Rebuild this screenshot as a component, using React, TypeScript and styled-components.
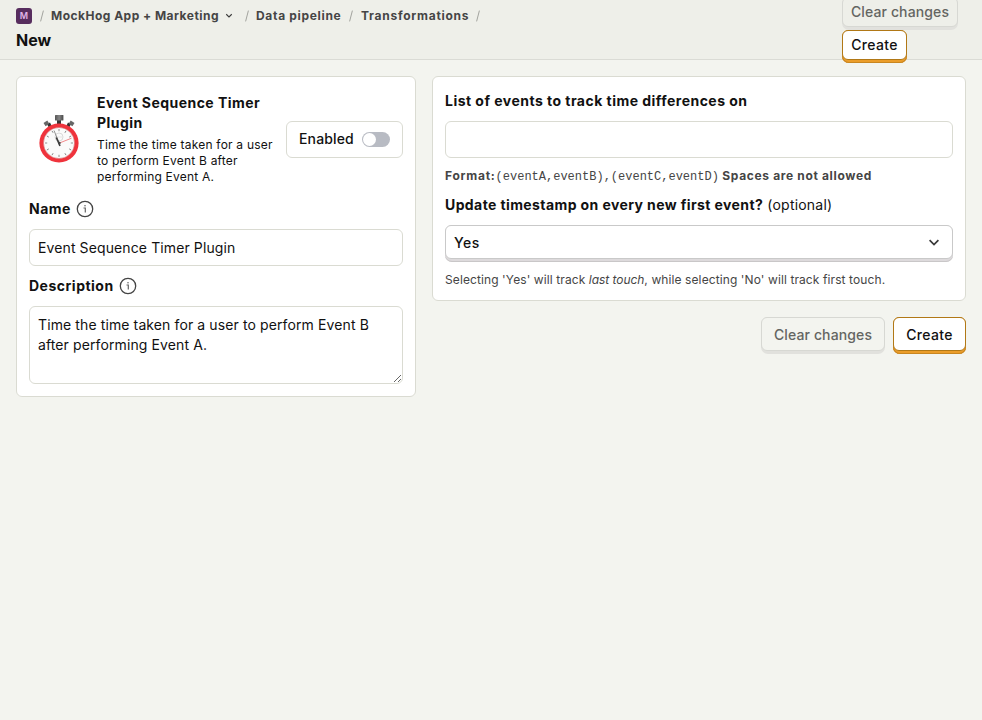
import React from 'react';
import styled, { createGlobalStyle, css } from 'styled-components';

const GlobalStyle = createGlobalStyle`
  *, *::before, *::after { box-sizing: border-box; }
  body {
    margin: 0;
    background: #f3f4ef;
    color: #111;
    font-family: Inter, sans-serif;
    font-size: 14px;
    line-height: 20px;
  }
`;

const Page = styled.div`
  min-height: 720px;
`;

const Header = styled.header`
  display: flex;
  align-items: center;
  justify-content: space-between;
  height: 60px;
  padding: 0 16px;
  background: #eeefe9;
  border-bottom: 1px solid #dadbd5;
`;

const Heading = styled.div`
  display: flex;
  flex-direction: column;
  height: 60px;
  padding-top: 8px;
`;

const Breadcrumbs = styled.nav`
  display: flex;
  align-items: center;
  height: 16px;
  font-size: 12px;
  line-height: 16px;
  font-weight: 700;
  color: #454545;
  white-space: nowrap;
`;

const ProjectBadge = styled.span`
  display: flex;
  align-items: center;
  justify-content: center;
  width: 16px;
  height: 16px;
  border-radius: 3px;
  background: #572d5e;
  color: #e2b5e8;
  font-size: 9px;
  font-weight: 600;
`;

const Crumb = styled.span<{ $width: number; $spacing: number }>`
  width: ${p => p.$width}px;
  letter-spacing: ${p => p.$spacing}px;
`;

const CrumbToggle = styled.span`
  display: flex;
  align-items: center;
  gap: 5px;
`;

const Separator = styled.span<{ $before?: number; $after?: number }>`
  width: 4px;
  height: 12px;
  margin: 0 ${p => p.$after ?? 7}px 0 ${p => p.$before ?? 8}px;
  display: flex;
`;

const Title = styled.h1`
  margin: 6px 0 0;
  font-size: 16px;
  line-height: 20px;
  font-weight: 700;
`;

const HeaderActions = styled.div`
  display: flex;
  flex-wrap: wrap;
  column-gap: 8px;
  width: 124px;
  margin-bottom: -1px;
`;

const FormActions = styled.div`
  display: flex;
  justify-content: flex-end;
  gap: 8px;
`;

const ButtonFace = styled.span`
  display: flex;
  align-items: center;
  justify-content: center;
  width: 100%;
  border: 1px solid;
  border-radius: 6px;
  white-space: nowrap;
`;

const Button = styled.button<{ $primary?: boolean; $small?: boolean; $width: number }>`
  display: flex;
  align-items: flex-start;
  width: ${p => p.$width}px;
  height: ${p => (p.$small ? 33 : 37)}px;
  padding: 0;
  border: 0;
  border-radius: 7px;
  font: 500 14px/20px Inter, sans-serif;

  ${ButtonFace} {
    height: ${p => (p.$small ? 30 : 34)}px;
    padding-top: ${p => (p.$small ? 0 : 2)}px;
  }

  ${p =>
    p.$primary
      ? css`
          color: #111;
          letter-spacing: 0.35px;
          background: #eb9d2a;
          box-shadow: inset 0 -1px 0 #c98620, inset 1px 0 0 #c98620, inset -1px 0 0 #c98620;
          ${ButtonFace} { background: #fff; border-color: #b17816; }
        `
      : css`
          color: #646562;
          letter-spacing: 0.12px;
          background: #e1e1dd;
          ${ButtonFace} {
            background: ${p.$small ? '#eeefe9' : '#f3f4ef'};
            border-color: #d7d8d3;
          }
        `}
`;

const Main = styled.main`
  display: flex;
  align-items: flex-start;
  gap: 16px;
  padding: 16px;
`;

const Column = styled.div<{ $width?: number }>`
  display: flex;
  flex-direction: column;
  gap: 16px;
  min-width: 0;
  ${p => (p.$width ? `width: ${p.$width}px; flex: none;` : 'flex: 1;')}
`;

const Card = styled.section`
  padding: 12px;
  background: #fff;
  border: 1px solid #dadbd2;
  border-radius: 6px;
`;

const PluginRow = styled.div`
  display: flex;
  align-items: center;
  gap: 8px;
  margin: 4px 0 14px;
`;

const PluginIcon = styled.div`
  display: flex;
  width: 60px;
  height: 60px;
  flex: none;
`;

const PluginInfo = styled.div`
  flex: 1;
  min-width: 0;
`;

const PluginName = styled.div`
  font-weight: 700;
  letter-spacing: 0.45px;
  margin-bottom: 4px;
`;

const PluginDescription = styled.div`
  font-size: 12px;
  line-height: 16px;
  letter-spacing: 0.21px;
`;

const EnabledBox = styled.label`
  display: flex;
  align-items: center;
  justify-content: space-between;
  width: 117px;
  height: 37px;
  flex: none;
  padding: 0 12px;
  border: 1px solid #dadbd2;
  border-radius: 6px;
  font-weight: 500;
  letter-spacing: 0.14px;
`;

const ToggleTrack = styled.span`
  display: flex;
  align-items: center;
  width: 28px;
  height: 15px;
  padding: 1px;
  border-radius: 8px;
  background: #b8bbc3;
`;

const ToggleHandle = styled.span`
  width: 13px;
  height: 13px;
  border-radius: 50%;
  background: #fff;
`;

const FieldLabel = styled.div<{ $top?: number; $spacing?: number }>`
  display: flex;
  align-items: center;
  height: 20px;
  margin: ${p => p.$top ?? 10}px 0 10px;
  font-weight: 700;
  letter-spacing: ${p => p.$spacing ?? 0.5}px;
  white-space: pre;
`;

const Optional = styled.span`
  font-weight: 400;
  letter-spacing: 0.2px;
`;

const InfoSvg = styled.svg`
  width: 18px;
  height: 18px;
  margin-left: 5px;
`;

const fieldStyle = css`
  display: block;
  width: 100%;
  border: 1px solid #dadbd2;
  border-radius: 6px;
  background: #fff;
  color: #111;
  font: 400 14px/20px Inter, sans-serif;
  letter-spacing: 0.11px;
  outline: none;
`;

const TextInput = styled.input`
  ${fieldStyle}
  height: 37px;
  padding: 0 8px;
`;

const TextArea = styled.textarea`
  ${fieldStyle}
  height: 78px;
  padding: 8px;
  resize: vertical;
`;

const Help = styled.div`
  margin-top: 10px;
  font-size: 12px;
  line-height: 16px;
  height: 16px;
  color: #454545;
  letter-spacing: 0.1px;
  white-space: nowrap;

  b { letter-spacing: 0.65px; }
  b:first-child { letter-spacing: 0.75px; }
  i { letter-spacing: -0.05px; }
`;

const Code = styled.code`
  font: 12px/16px "Liberation Mono", monospace;
  letter-spacing: 0;
`;

const Select = styled.button`
  display: flex;
  align-items: flex-start;
  width: 100%;
  height: 37px;
  padding: 0;
  border: 0;
  border-radius: 7px;
  background: #dddadc;
  box-shadow: inset 0 -1px 0 #c9c7c8;
  color: #111;
  font: 500 14px/20px Inter, sans-serif;
  letter-spacing: 0.5px;

  ${ButtonFace} {
    height: 34px;
    justify-content: space-between;
    padding: 1px 10px 0 8px;
    background: #fff;
    border-color: #c9c9c9;
  }
`;

const InfoIcon = () => (
  <InfoSvg viewBox="0 0 18 18" fill="none" stroke="#454545">
    <circle cx="9" cy="9" r="7.7" strokeWidth="1.3" />
    <path d="M7.5 8H9.3V12.4" stroke="#666" strokeWidth="1.2" />
    <circle cx="9" cy="5.7" r=".8" fill="#666" stroke="none" />
  </InfoSvg>
);

const Chevron = ({ size }: { size: number }) => (
  <svg width={size} height={size} viewBox="0 0 16 16" fill="none" stroke="#3a3a3a" strokeWidth="1.7">
    <path d="M3.6 5.2 8 9.6l4.4-4.4" />
  </svg>
);

const Slash = ({ before, after }: { before?: number; after?: number }) => (
  <Separator $before={before} $after={after}>
    <svg width="4" height="12" viewBox="0 0 4 12" stroke="#a2a39e" strokeWidth="1">
      <path d="M3.4.6.6 11.4" />
    </svg>
  </Separator>
);

const ticks = Array.from({ length: 12 }, (_, i) => i * 30);

const Stopwatch = () => (
  <svg width="60" height="60" viewBox="0 0 60 60">
    <defs>
      <linearGradient id="metal" x1="0" y1="0" x2="1" y2="0">
        <stop offset="0" stopColor="#555" />
        <stop offset=".5" stopColor="#858585" />
        <stop offset="1" stopColor="#484848" />
      </linearGradient>
    </defs>
    <path d="M28 11h4v5h-4z" fill="#353535" />
    <rect x="26" y="6" width="8.4" height="5.6" rx=".6" fill="url(#metal)" />
    <path d="m18 15 3-1.5 2 4-3 1.5z" fill="#333" />
    <path d="m14.5 14 3.8-2.6 2 3.4-3.7 2.5z" fill="#666" />
    <path d="m42 15-3-1.5-2 4 3 1.5z" fill="#333" />
    <path d="m45.5 14-3.8-2.6-2 3.4 3.7 2.5z" fill="#666" />
    <circle cx="30" cy="34" r="19.6" fill="#ef333c" />
    <circle cx="30" cy="34" r="15.5" fill="#fafafa" stroke="#ce6b6d" strokeWidth=".5" />
    {ticks.map(angle => (
      <path key={angle} d="M30 20v2.2" stroke="#777" strokeWidth=".8" transform={`rotate(${angle} 30 34)`} />
    ))}
    <circle cx="30" cy="28" r="4" fill="none" stroke="#ccc" strokeWidth=".7" />
    <path d="m27 28 6 0" stroke="#ccc" strokeWidth=".5" />
    <path d="m30.5 34 12-4.8" stroke="#ef6b6e" strokeWidth=".8" />
    <path d="m25 21.5 5.8 14" stroke="#777" strokeWidth=".8" />
    <path d="m27.3 28.5 3.7 8.5" stroke="#393939" strokeWidth="1.6" />
    <circle cx="30.5" cy="34" r="1.2" fill="#444" />
  </svg>
);

export default function App() {
  return (
    <Page>
      <GlobalStyle />
      <Header>
        <Heading>
          <Breadcrumbs>
            <ProjectBadge>M</ProjectBadge>
            <Slash />
            <CrumbToggle>
              <Crumb $width={168} $spacing={0.48}>MockHog App + Marketing</Crumb>
              <Chevron size={10} />
            </CrumbToggle>
            <Slash before={11} />
            <Crumb $width={85} $spacing={0.68}>Data pipeline</Crumb>
            <Slash after={8} />
            <Crumb $width={108} $spacing={0.74}>Transformations</Crumb>
            <Slash before={7} />
          </Breadcrumbs>
          <Title>New</Title>
        </Heading>
        <HeaderActions>
          <Button $small $width={116} disabled><ButtonFace>Clear changes</ButtonFace></Button>
          <Button $small $primary $width={65}><ButtonFace>Create</ButtonFace></Button>
        </HeaderActions>
      </Header>
      <Main>
        <Column $width={400}>
          <Card>
            <PluginRow>
              <PluginIcon><Stopwatch /></PluginIcon>
              <PluginInfo>
                <PluginName>Event Sequence Timer Plugin</PluginName>
                <PluginDescription>
                  Time the time taken for a user to perform Event B after performing Event A.
                </PluginDescription>
              </PluginInfo>
              <EnabledBox>
                Enabled
                <ToggleTrack><ToggleHandle /></ToggleTrack>
              </EnabledBox>
            </PluginRow>
            <FieldLabel>Name<InfoIcon /></FieldLabel>
            <TextInput defaultValue="Event Sequence Timer Plugin" />
            <FieldLabel>Description<InfoIcon /></FieldLabel>
            <TextArea defaultValue="Time the time taken for a user to perform Event B after performing Event A." />
          </Card>
        </Column>
        <Column>
          <Card>
            <FieldLabel $top={2} $spacing={0.47}>List of events to track time differences on</FieldLabel>
            <TextInput />
            <Help>
              <b>Format:</b><Code>(eventA,eventB),(eventC,eventD)</Code> <b>Spaces are not allowed</b>
            </Help>
            <FieldLabel $top={11} $spacing={0.4}>
              Update timestamp on every new first event?<Optional> (optional)</Optional>
            </FieldLabel>
            <Select>
              <ButtonFace>Yes<Chevron size={16} /></ButtonFace>
            </Select>
            <Help>
              Selecting 'Yes' will track <i>last touch</i>, while selecting 'No' will track first touch.
            </Help>
          </Card>
          <FormActions>
            <Button $width={124} disabled><ButtonFace>Clear changes</ButtonFace></Button>
            <Button $primary $width={73}><ButtonFace>Create</ButtonFace></Button>
          </FormActions>
        </Column>
      </Main>
    </Page>
  );
}
